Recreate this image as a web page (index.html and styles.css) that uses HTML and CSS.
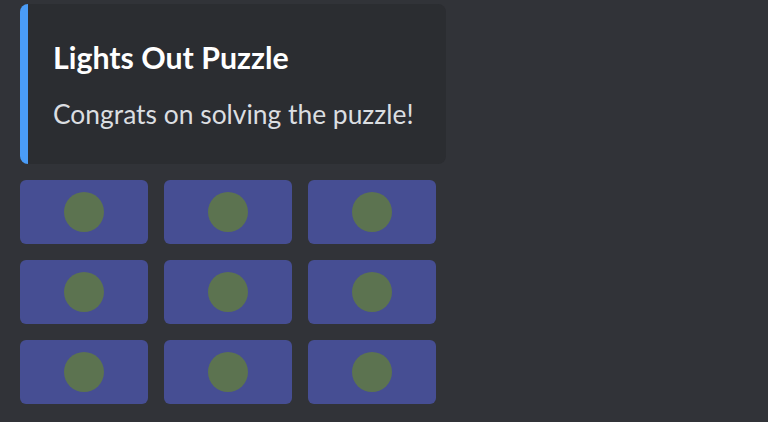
FILE: index.html
```html
<!DOCTYPE html>
<html>
<head>
<meta charset="utf-8">
<link rel="stylesheet" href="styles.css">
</head>
<body>
<div class="wrap">
  <div class="embed">
    <div class="title">Lights Out Puzzle</div>
    <div class="desc">Congrats on solving the puzzle!</div>
  </div>
  <div class="grid">
    <div class="btn"><span class="dot"></span></div>
    <div class="btn"><span class="dot"></span></div>
    <div class="btn"><span class="dot"></span></div>
    <div class="btn"><span class="dot"></span></div>
    <div class="btn"><span class="dot"></span></div>
    <div class="btn"><span class="dot"></span></div>
    <div class="btn"><span class="dot"></span></div>
    <div class="btn"><span class="dot"></span></div>
    <div class="btn"><span class="dot"></span></div>
  </div>
</div>
</body>
</html>
```
FILE: styles.css
```css
html, body {
  margin: 0;
  padding: 0;
  background: #313338;
  font-family: Lato, "Open Sans", sans-serif;
}
.wrap {
  padding: 4px 0 0 20px;
}
.embed {
  width: 426px;
  height: 160px;
  box-sizing: border-box;
  background: #2b2d31;
  border-left: 8px solid #4a9cf7;
  border-radius: 8px;
  padding: 35px 0 0 25px;
}
.title {
  color: #ffffff;
  font-weight: 700;
  font-size: 30.3px;
  line-height: 36px;
}
.desc {
  color: #dbdee1;
  font-size: 26.4px;
  line-height: 36px;
  margin-top: 21px;
}
.grid {
  margin-top: 16px;
  display: grid;
  grid-template-columns: repeat(3, 128px);
  grid-auto-rows: 64px;
  gap: 16px;
}
.btn {
  background: #464e93;
  border-radius: 6px;
  display: flex;
  align-items: center;
  justify-content: center;
}
.dot {
  width: 40px;
  height: 40px;
  border-radius: 50%;
  background: #5c7350;
}
```
